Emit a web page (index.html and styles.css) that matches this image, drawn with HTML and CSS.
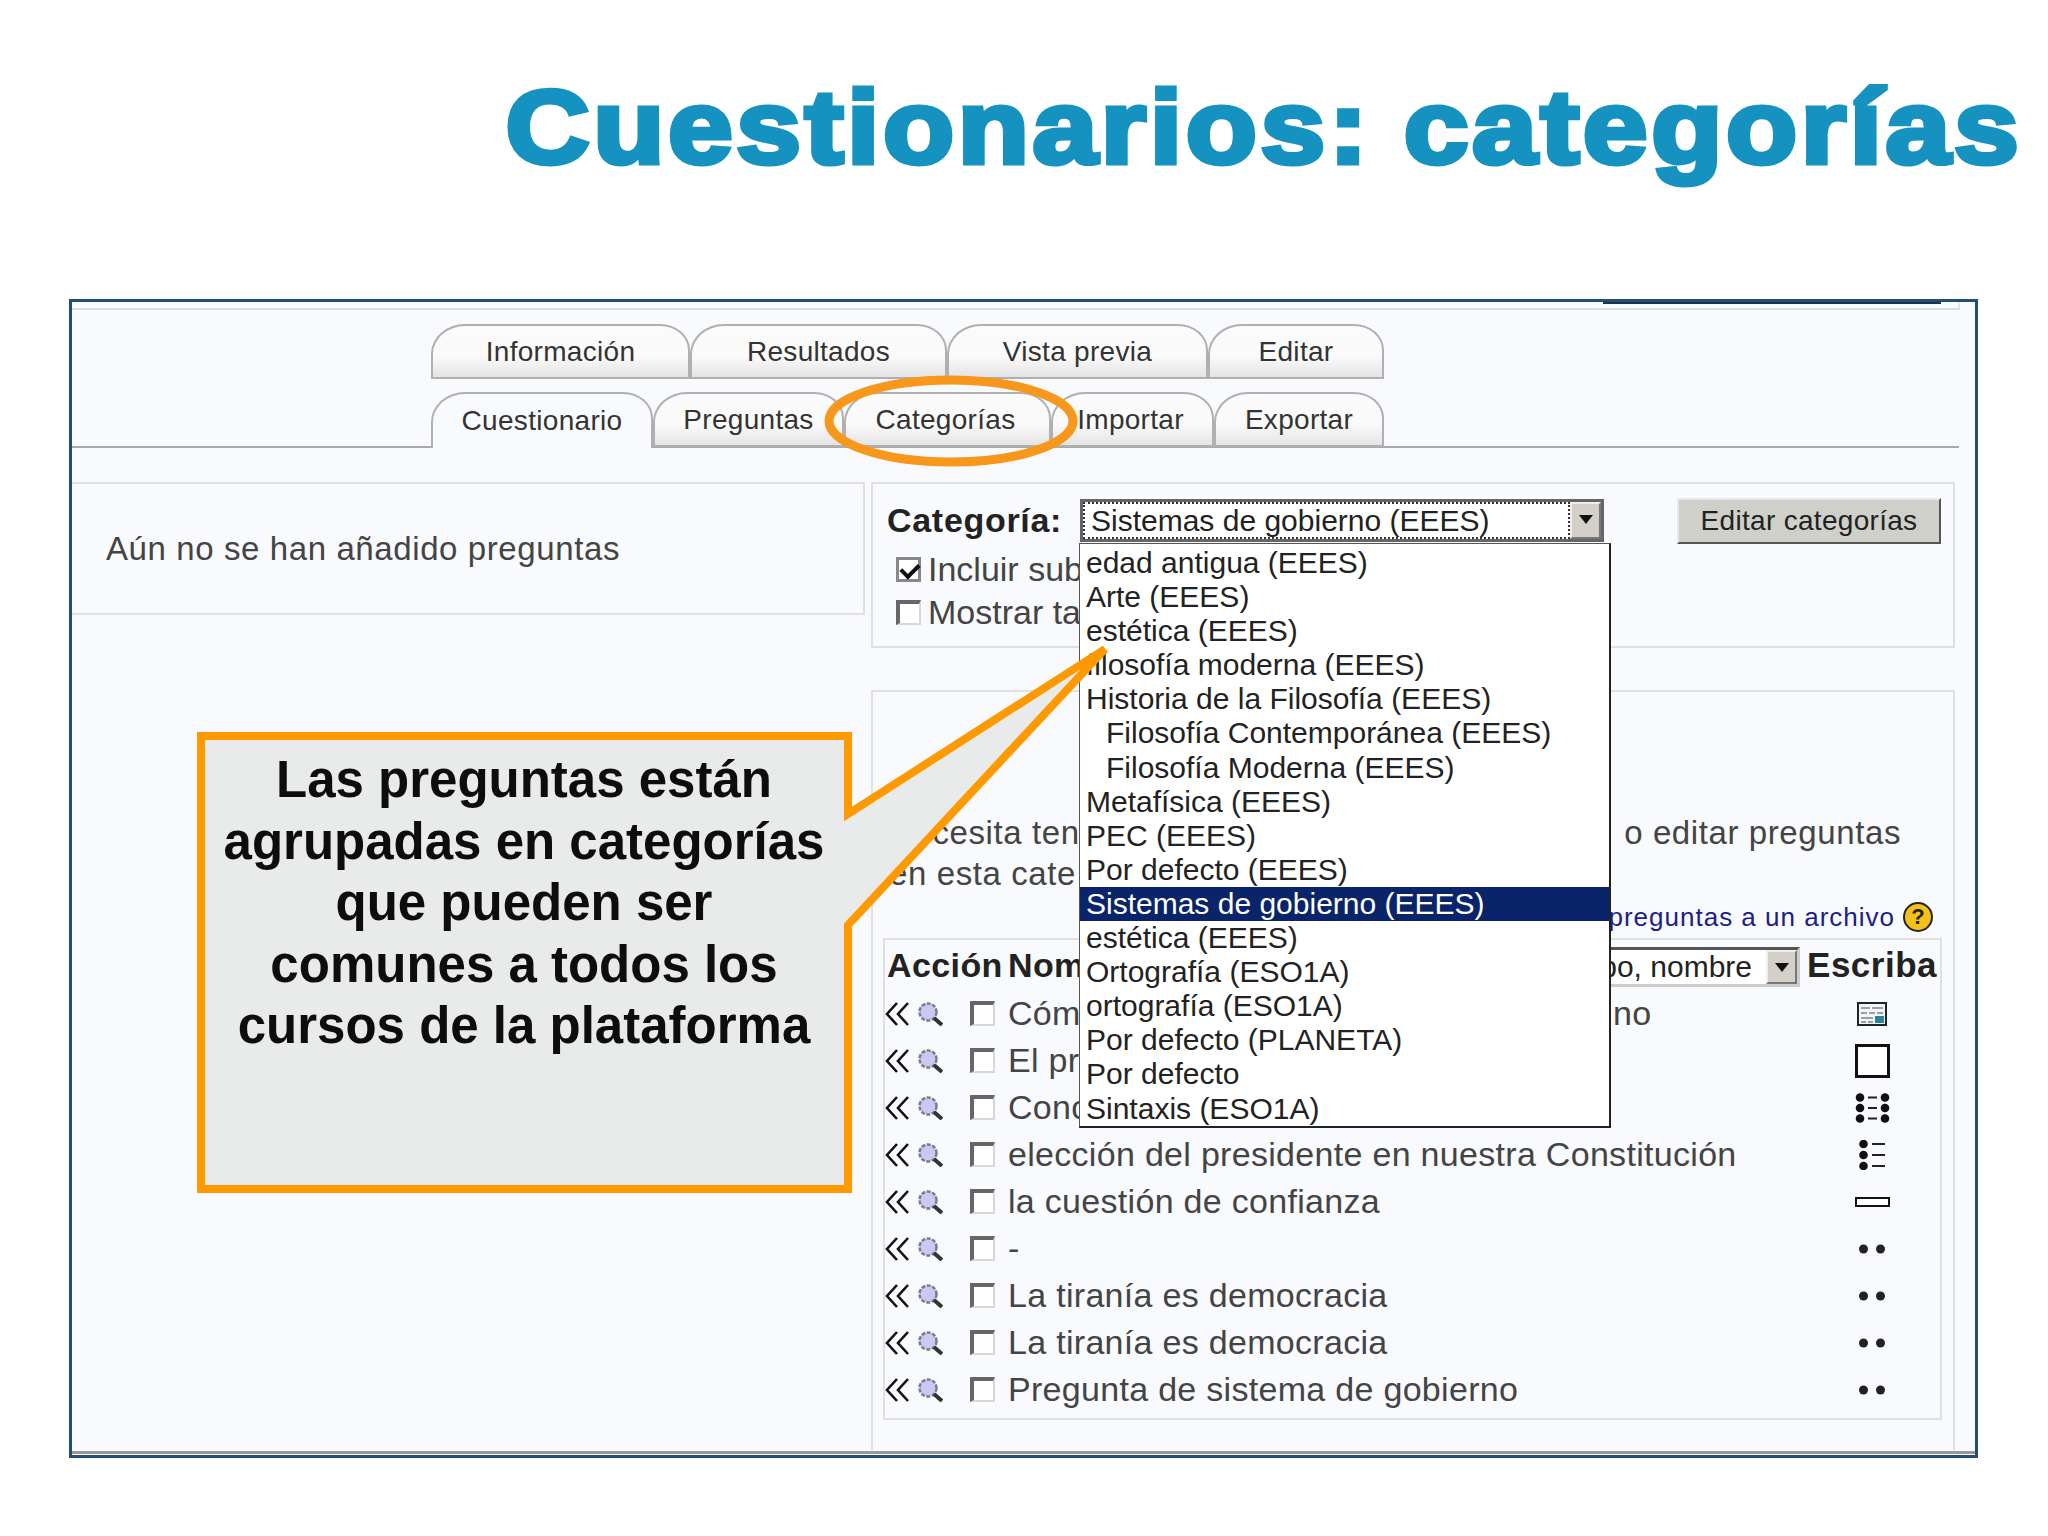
FILE: index.html
```html
<!DOCTYPE html>
<html lang="es">
<head>
    <meta charset="UTF-8">
    <title>Cuestionarios: categorías</title>
    <link rel="stylesheet" href="styles.css">
</head>
<body>
    <svg class="defs" width="0" height="0">
        <symbol id="arrows" viewBox="0 0 24 24">
            <path d="M12 1 L2 12 L12 23 M23 1 L13 12 L23 23" fill="none" stroke="#111" stroke-width="2.6"/>
        </symbol>
        <symbol id="lens" viewBox="0 0 25 24">
            <circle cx="10" cy="10" r="8.5" fill="#c9caf4" stroke="#7c7c8c" stroke-width="2.5" stroke-dasharray="4 1.5"/>
            <path d="M16 16 L24 23" stroke="#333" stroke-width="4"/>
        </symbol>
        <symbol id="dots" viewBox="0 0 30 12">
            <circle cx="6.5" cy="6" r="4.5" fill="#222"/>
            <circle cx="23.5" cy="6" r="4.5" fill="#222"/>
        </symbol>
    </svg>

    <h1 class="title"><span>Cuestionarios: categorías</span></h1>

    <div class="frame">
        <div class="sheet">
            <div class="topline"><div class="topbar"></div></div>

            <div class="tabs">
                <div class="tabrow">
                    <div class="tab w259">Información</div>
                    <div class="tab w257">Resultados</div>
                    <div class="tab w261">Vista previa</div>
                    <div class="tab w176">Editar</div>
                </div>
                <div class="tabrow second">
                    <div class="tab active w222">Cuestionario</div>
                    <div class="tab w191">Preguntas</div>
                    <div class="tab w207">Categorías</div>
                    <div class="tab w163">Importar</div>
                    <div class="tab w170">Exportar</div>
                </div>
            </div>

            <div class="content">
                <div class="notice">Aún no se han añadido preguntas</div>

                <div class="side">
                    <div class="panel filter">
                        <div class="filterrow">
                            <span class="label">Categoría:</span>
                            <div class="select catselect">
                                <span class="seltext">Sistemas de gobierno (EEES)</span>
                                <span class="selbtn"></span>
                                <div class="menu">
                                    <div class="opt">edad antigua (EEES)</div>
                                    <div class="opt">Arte (EEES)</div>
                                    <div class="opt">estética (EEES)</div>
                                    <div class="opt">filosofía moderna (EEES)</div>
                                    <div class="opt">Historia de la Filosofía (EEES)</div>
                                    <div class="opt sub">Filosofía Contemporánea (EEES)</div>
                                    <div class="opt sub">Filosofía Moderna (EEES)</div>
                                    <div class="opt">Metafísica (EEES)</div>
                                    <div class="opt">PEC (EEES)</div>
                                    <div class="opt">Por defecto (EEES)</div>
                                    <div class="opt picked">Sistemas de gobierno (EEES)</div>
                                    <div class="opt">estética (EEES)</div>
                                    <div class="opt">Ortografía (ESO1A)</div>
                                    <div class="opt">ortografía (ESO1A)</div>
                                    <div class="opt">Por defecto (PLANETA)</div>
                                    <div class="opt">Por defecto</div>
                                    <div class="opt">Sintaxis (ESO1A)</div>
                                </div>
                            </div>
                            <div class="editbtn">Editar categorías</div>
                        </div>
                        <div class="optrow"><span class="check on"></span>Incluir sub</div>
                        <div class="optrow"><span class="check"></span>Mostrar ta</div>
                    </div>

                    <div class="panel questions">
                        <div class="line"><span>Necesita ten</span><span>o editar preguntas</span></div>
                        <div class="line">en esta cate</div>
                        <div class="export">preguntas a un archivo<span class="help">?</span></div>

                        <div class="qtable">
                            <div class="qhead">
                                <b class="hact">Acción</b>
                                <b>Nom</b>
                                <div class="select sortselect">
                                    <span class="seltext">po, nombre</span>
                                    <span class="selbtn"></span>
                                </div>
                                <b class="htype">Escriba</b>
                            </div>

                            <div class="qrow">
                                <svg class="ico-arrows"><use href="#arrows"/></svg>
                                <svg class="ico-lens"><use href="#lens"/></svg>
                                <span class="check"></span>
                                <span class="qname qsplit">Cóm</span>
                                <span class="qname qtail">no</span>
                                <span class="qtype">
                                    <svg width="30" height="24" viewBox="0 0 30 24">
                                        <rect x="1" y="1" width="28" height="22" fill="#f2f4f6" stroke="#222" stroke-width="2"/>
                                        <path d="M4 6 H13 M15 6 H26 M4 11 H10 M12 11 H18 M20 11 H26 M4 16 H16 M4 20 H9 M11 20 H16" stroke="#9a9fa8" stroke-width="2"/>
                                        <rect x="18" y="14" width="9" height="7" fill="#2f8296"/>
                                    </svg>
                                </span>
                            </div>
                            <div class="qrow">
                                <svg class="ico-arrows"><use href="#arrows"/></svg>
                                <svg class="ico-lens"><use href="#lens"/></svg>
                                <span class="check"></span>
                                <span class="qname">El pr</span>
                                <span class="qtype">
                                    <svg width="35" height="34" viewBox="0 0 35 34">
                                        <rect x="1.5" y="1.5" width="32" height="31" fill="#fff" stroke="#111" stroke-width="3"/>
                                    </svg>
                                </span>
                            </div>
                            <div class="qrow">
                                <svg class="ico-arrows"><use href="#arrows"/></svg>
                                <svg class="ico-lens"><use href="#lens"/></svg>
                                <span class="check"></span>
                                <span class="qname">Conc</span>
                                <span class="qtype">
                                    <svg width="35" height="30" viewBox="0 0 35 30">
                                        <path d="M13 4.5 H22 M13 15 H22 M13 25.5 H22" stroke="#222" stroke-width="2"/>
                                        <circle cx="5" cy="4.5" r="4.3" fill="#111"/><circle cx="30" cy="4.5" r="4.3" fill="#111"/>
                                        <circle cx="5" cy="15" r="4.3" fill="#111"/><circle cx="30" cy="15" r="4.3" fill="#111"/>
                                        <circle cx="5" cy="25.5" r="4.3" fill="#111"/><circle cx="30" cy="25.5" r="4.3" fill="#111"/>
                                    </svg>
                                </span>
                            </div>
                            <div class="qrow">
                                <svg class="ico-arrows"><use href="#arrows"/></svg>
                                <svg class="ico-lens"><use href="#lens"/></svg>
                                <span class="check"></span>
                                <span class="qname">elección del presidente en nuestra Constitución</span>
                                <span class="qtype">
                                    <svg width="26" height="30" viewBox="0 0 26 30">
                                        <path d="M13 4 H26 M13 15 H26 M13 26 H26" stroke="#222" stroke-width="2"/>
                                        <circle cx="4.5" cy="4" r="4.3" fill="#111"/>
                                        <circle cx="4.5" cy="15" r="4.3" fill="#111"/>
                                        <circle cx="4.5" cy="26" r="4.3" fill="#111"/>
                                    </svg>
                                </span>
                            </div>
                            <div class="qrow">
                                <svg class="ico-arrows"><use href="#arrows"/></svg>
                                <svg class="ico-lens"><use href="#lens"/></svg>
                                <span class="check"></span>
                                <span class="qname">la cuestión de confianza</span>
                                <span class="qtype">
                                    <svg width="35" height="10" viewBox="0 0 35 10">
                                        <rect x="1" y="1" width="33" height="8" fill="#fff" stroke="#111" stroke-width="2"/>
                                    </svg>
                                </span>
                            </div>
                            <div class="qrow">
                                <svg class="ico-arrows"><use href="#arrows"/></svg>
                                <svg class="ico-lens"><use href="#lens"/></svg>
                                <span class="check"></span>
                                <span class="qname">-</span>
                                <span class="qtype"><svg class="ico-dots"><use href="#dots"/></svg></span>
                            </div>
                            <div class="qrow">
                                <svg class="ico-arrows"><use href="#arrows"/></svg>
                                <svg class="ico-lens"><use href="#lens"/></svg>
                                <span class="check"></span>
                                <span class="qname">La tiranía es democracia</span>
                                <span class="qtype"><svg class="ico-dots"><use href="#dots"/></svg></span>
                            </div>
                            <div class="qrow">
                                <svg class="ico-arrows"><use href="#arrows"/></svg>
                                <svg class="ico-lens"><use href="#lens"/></svg>
                                <span class="check"></span>
                                <span class="qname">La tiranía es democracia</span>
                                <span class="qtype"><svg class="ico-dots"><use href="#dots"/></svg></span>
                            </div>
                            <div class="qrow">
                                <svg class="ico-arrows"><use href="#arrows"/></svg>
                                <svg class="ico-lens"><use href="#lens"/></svg>
                                <span class="check"></span>
                                <span class="qname">Pregunta de sistema de gobierno</span>
                                <span class="qtype"><svg class="ico-dots"><use href="#dots"/></svg></span>
                            </div>
                        </div>
                    </div>
                </div>
            </div>
        </div>
    </div>

    <!-- orange marks drawn over the screenshot -->
    <svg class="ring" width="256" height="92" viewBox="0 0 256 92">
        <ellipse cx="128" cy="46" rx="122" ry="41" fill="none" stroke="#f7981d" stroke-width="9"/>
    </svg>

    <div class="callout">
        <svg class="bubble" width="930" height="560" viewBox="0 0 930 560">
            <path d="M4 91 H651 V169 L908 4 L651 280 V544 H4 Z" fill="#e9ebeb" stroke="#ff9900" stroke-width="8" stroke-miterlimit="6"/>
        </svg>
        <p class="calltext">Las preguntas están<br>agrupadas en categorías<br>que pueden ser<br>comunes a todos los<br>cursos de la plataforma</p>
    </div>
</body>
</html>
```

FILE: styles.css
```css
* {
    margin: 0;
    padding: 0;
    box-sizing: border-box;
}

body {
    position: relative;
    width: 2048px;
    height: 1536px;
    overflow: hidden;
    background-color: #fff;
    font-family: "Liberation Sans", Arial, sans-serif;
    color: #333;
}

.defs {
    position: absolute;
}

.title {
    height: 299px;
    padding: 62px 26px 0 0;
    text-align: right;
    font-size: 104px;
    line-height: 130px;
    font-weight: 700;
    color: #1592c0;
    white-space: nowrap;
}

.title span {
    display: inline-block;
    letter-spacing: 3.2px;
    word-spacing: -3px;
    -webkit-text-stroke: 5px #1592c0;
    transform: scaleX(1.12);
    transform-origin: right center;
}

.frame {
    width: 1909px;
    height: 1159px;
    margin-left: 69px;
    border: 3px solid #234d73;
    background-color: #fff;
}

.sheet {
    height: 1152px;
    background-color: #f9fafd;
    border-bottom: 3px solid #999;
}

.topline {
    height: 8px;
    margin-right: 15px;
    border-bottom: 2px solid #ddd;
    border-right: 2px solid #e4e4e4;
}

.topbar {
    width: 338px;
    height: 2px;
    margin-left: 1531px;
    background-color: #1c3350;
}

.tabs {
    margin-top: 14px;
    margin-right: 16px;
}

.tabrow {
    display: flex;
    height: 55px;
    padding-left: 359px;
}

.tabrow.second {
    height: 56px;
    margin-top: 13px;
    border-bottom: 2px solid #aaa;
}

.tab {
    display: flex;
    align-items: center;
    justify-content: center;
    height: 55px;
    border: 2px solid #b0b0b0;
    border-radius: 34px 30px 0 0 / 30px 26px 0 0;
    background: linear-gradient(#fbfbfb, #fafafa 60%, #e4e4e4);
    font-size: 28px;
    letter-spacing: 0.3px;
    color: #333;
}

.tab.active {
    height: 56px;
    border-bottom: none;
    background: #f9fafd;
}

.w259 { width: 259px; }
.w257 { width: 257px; }
.w261 { width: 261px; }
.w176 { width: 176px; }
.w222 { width: 222px; }
.w191 { width: 191px; }
.w207 { width: 207px; padding-right: 4px; }
.w163 { width: 163px; padding-right: 4px; }
.w170 { width: 170px; }

.content {
    display: flex;
    gap: 6px;
    margin-top: 34px;
}

.notice {
    display: flex;
    align-items: center;
    width: 793px;
    height: 133px;
    padding-left: 34px;
    border: 2px solid #e0e0e0;
    border-left: none;
    font-size: 33px;
    letter-spacing: 0.6px;
    color: #444;
}

.side {
    display: flex;
    flex-direction: column;
    gap: 42px;
    width: 1084px;
}

.panel {
    border: 2px solid #e0e0e0;
}

.filter {
    height: 166px;
    padding: 14px 0 0 14px;
}

.filterrow {
    display: flex;
    align-items: center;
    height: 45px;
}

.label {
    width: 193px;
    font-size: 34px;
    font-weight: 700;
    letter-spacing: 0.7px;
    color: #222;
}

.select {
    position: relative;
    display: flex;
    align-items: center;
    background-color: #fff;
    border: 3px solid;
    border-color: #666 #666 #666 #666;
    font-size: 30px;
    color: #222;
}

.catselect {
    width: 524px;
    height: 43px;
}

.seltext {
    flex: 1;
    white-space: nowrap;
}

.catselect .seltext {
    height: 100%;
    padding-left: 6px;
    border: 2px dotted #333;
    line-height: 34px;
}

.selbtn {
    position: relative;
    flex: none;
    width: 31px;
    height: 100%;
    background-color: #d4d0c8;
    border: 2px solid;
    border-color: #eee #777 #777 #eee;
}

.selbtn::after {
    content: "";
    position: absolute;
    left: 7px;
    top: 11px;
    border-left: 7px solid transparent;
    border-right: 7px solid transparent;
    border-top: 9px solid #111;
}

.menu {
    position: absolute;
    z-index: 2;
    top: 41px;
    left: -4px;
    width: 532px;
    height: 585px;
    padding: 2px 0;
    background-color: #fff;
    border: 1px solid #555;
    border-right: 2px solid #222;
    border-bottom: 2px solid #222;
}

.opt {
    height: 34.1px;
    padding-left: 6px;
    font-size: 30px;
    line-height: 34px;
    white-space: nowrap;
    color: #222;
}

.opt.sub {
    padding-left: 26px;
}

.opt.picked {
    background-color: #0a246a;
    color: #fff;
}

.editbtn {
    display: flex;
    align-items: center;
    justify-content: center;
    width: 264px;
    height: 46px;
    margin-left: 73px;
    background-color: #d0d0cb;
    border: 2px solid;
    border-color: #e8e8e8 #555 #555 #e8e8e8;
    font-size: 28px;
    letter-spacing: 0.3px;
    color: #222;
}

.optrow {
    display: flex;
    align-items: center;
    gap: 7px;
    height: 43px;
    padding-left: 9px;
    font-size: 34px;
    white-space: nowrap;
    color: #444;
}

.filterrow + .optrow {
    margin-top: 5px;
}

.check {
    position: relative;
    flex: none;
    display: block;
    width: 25px;
    height: 25px;
    background-color: #fff;
    border-style: solid;
    border-width: 4px 2px 2px 4px;
    border-color: #666 #d8d8d8 #d8d8d8 #666;
}

.check.on {
    border-width: 3px;
    border-color: #888;
}

.check.on::after {
    content: "";
    position: absolute;
    left: 2px;
    top: 3px;
    width: 14px;
    height: 8px;
    border: solid #111;
    border-width: 0 0 4px 4px;
    transform: rotate(-45deg);
}

.questions {
    height: 760px;
    padding: 120px 11px 0 10px;
    border-bottom: none;
}

.line {
    display: flex;
    justify-content: space-between;
    height: 41px;
    padding: 0 41px 0 6px;
    font-size: 33px;
    line-height: 41px;
    letter-spacing: 0.6px;
    white-space: nowrap;
    color: #444;
}

.export {
    display: flex;
    align-items: center;
    justify-content: flex-end;
    gap: 8px;
    height: 42px;
    margin-top: 2px;
    font-size: 26px;
    letter-spacing: 1px;
    color: #1c1c8a;
}

.help {
    display: flex;
    align-items: center;
    justify-content: center;
    width: 30px;
    height: 30px;
    margin-right: 9px;
    border-radius: 50%;
    background-color: #f2c21a;
    border: 2px solid #222;
    font-size: 22px;
    font-weight: 700;
    letter-spacing: 0;
    color: #222;
}

.qtable {
    height: 482px;
    padding: 0 23px 7px 2px;
    border: 2px solid #e0e0e0;
}

.qhead {
    position: relative;
    display: flex;
    align-items: center;
    height: 50px;
    font-size: 34px;
    letter-spacing: 0.4px;
    color: #222;
}

.hact {
    width: 121px;
}

.sortselect {
    position: absolute;
    top: 7px;
    right: 117px;
    width: 300px;
    height: 40px;
    border-top-color: #555;
    border-left-color: #555;
    border-right-color: #ccc;
    border-bottom-color: #ccc;
    letter-spacing: 0;
    font-size: 30px;
}

.sortselect .seltext {
    text-align: right;
    padding-right: 14px;
}

.htype {
    position: absolute;
    right: -20px;
    font-size: 35px;
    letter-spacing: 0.5px;
}

.qrow {
    display: flex;
    align-items: center;
    height: 47px;
    margin-left: -2px;
}

.ico-arrows {
    width: 24px;
    height: 24px;
    margin-right: 9px;
}

.ico-lens {
    width: 25px;
    height: 24px;
    margin-right: 27px;
}

.qname {
    margin-left: 13px;
    font-size: 34px;
    letter-spacing: 0.3px;
    white-space: nowrap;
    color: #444;
}

.qsplit {
    width: 605px;
}

.qtail {
    margin-left: 0;
}

.qtype {
    display: flex;
    align-items: center;
    justify-content: center;
    width: 90px;
    margin-left: auto;
}

.ico-dots {
    width: 30px;
    height: 12px;
}

.ring {
    position: absolute;
    z-index: 3;
    left: 823px;
    top: 375px;
}

.callout {
    position: absolute;
    z-index: 3;
    left: 197px;
    top: 645px;
    width: 930px;
    height: 560px;
}

.bubble {
    position: absolute;
    left: 0;
    top: 0;
}

.calltext {
    position: absolute;
    left: 2px;
    top: 104px;
    width: 650px;
    text-align: center;
    font-size: 51px;
    line-height: 61.5px;
    font-weight: 700;
    color: #0d0d0d;
}
```
